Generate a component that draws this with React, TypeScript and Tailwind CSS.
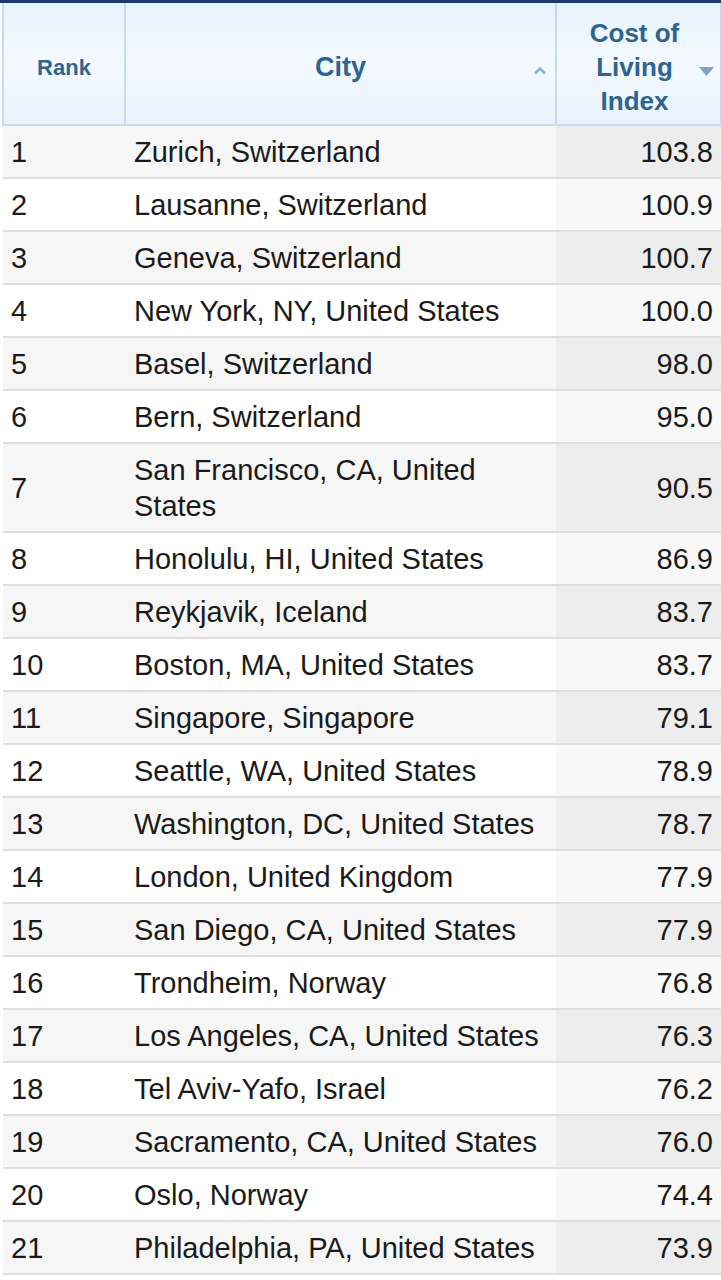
const rows: [number, string, string][] = [
  [1, "Zurich, Switzerland", "103.8"],
  [2, "Lausanne, Switzerland", "100.9"],
  [3, "Geneva, Switzerland", "100.7"],
  [4, "New York, NY, United States", "100.0"],
  [5, "Basel, Switzerland", "98.0"],
  [6, "Bern, Switzerland", "95.0"],
  [7, "San Francisco, CA, United States", "90.5"],
  [8, "Honolulu, HI, United States", "86.9"],
  [9, "Reykjavik, Iceland", "83.7"],
  [10, "Boston, MA, United States", "83.7"],
  [11, "Singapore, Singapore", "79.1"],
  [12, "Seattle, WA, United States", "78.9"],
  [13, "Washington, DC, United States", "78.7"],
  [14, "London, United Kingdom", "77.9"],
  [15, "San Diego, CA, United States", "77.9"],
  [16, "Trondheim, Norway", "76.8"],
  [17, "Los Angeles, CA, United States", "76.3"],
  [18, "Tel Aviv-Yafo, Israel", "76.2"],
  [19, "Sacramento, CA, United States", "76.0"],
  [20, "Oslo, Norway", "74.4"],
  [21, "Philadelphia, PA, United States", "73.9"],
];

export default function App() {
  return (
    <div
      className="w-[721px] h-[1280px] overflow-hidden bg-white border-t-[3px] border-[#1d3b6c]"
      style={{ fontFamily: '"Liberation Sans", Arial, sans-serif' }}
    >
      <table className="w-[718px] ml-[2px] border-collapse table-fixed">
        <colgroup>
          <col className="w-[122px]" />
          <col className="w-[431px]" />
          <col className="w-[165px]" />
        </colgroup>
        <thead>
          <tr className="h-[122px] bg-gradient-to-b from-[#e8f3fd] via-[#f3f9fe] to-[#e8f3fd] text-[#2e6590] font-bold">
            <th className="border-2 border-t-0 border-[#c9dae8] text-[22px] pt-[8px] align-middle">
              Rank
            </th>
            <th className="border-2 border-t-0 border-[#c9dae8] text-[27px] pt-[8px] align-middle relative">
              City
              <svg
                className="absolute right-[8px] top-[63px]"
                width="14"
                height="9"
                viewBox="0 0 14 9"
                fill="none"
                stroke="#8fb0cc"
                strokeWidth="2.5"
              >
                <path d="M2 7.5L7 2.5l5 5" />
              </svg>
            </th>
            <th className="border-2 border-t-0 border-[#c9dae8] text-[26px] leading-[34px] pt-[6px] align-middle relative">
              <div className="pr-[8px]">
                Cost of
                <br />
                Living
                <br />
                Index
              </div>
              <svg
                className="absolute right-[6px] top-[64px]"
                width="15"
                height="9"
                viewBox="0 0 15 9"
              >
                <path d="M0 0h15L7.5 9z" fill="#7fa3c3" />
              </svg>
            </th>
          </tr>
        </thead>
        <tbody className="text-[29px] leading-[36px] text-[#1a1a1a]">
          {rows.map(([rank, city, cost]) => {
            const odd = rank % 2 === 1;
            return (
              <tr
                key={rank}
                className={
                  odd
                    ? "bg-[#f6f6f6] border-b-2 border-[#dedede]"
                    : "bg-white border-b-2 border-[#dedede]"
                }
              >
                <td className="pl-[8px] pt-[8px] pb-[7px] align-middle">{rank}</td>
                <td className="pl-[9px] pr-[8px] pt-[8px] pb-[7px] align-middle">{city}</td>
                <td
                  className={
                    odd
                      ? "pr-[8px] pt-[8px] pb-[7px] text-right align-middle bg-[#ededed]"
                      : "pr-[8px] pt-[8px] pb-[7px] text-right align-middle bg-[#f8f8f8]"
                  }
                >
                  {cost}
                </td>
              </tr>
            );
          })}
        </tbody>
      </table>
    </div>
  );
}
